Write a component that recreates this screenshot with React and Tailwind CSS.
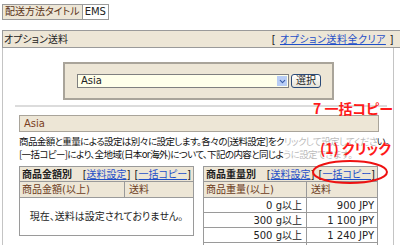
import { ChevronDown } from 'lucide-react';

const beige = 'bg-[#ede6d6]';

const Link = ({ children }) => (
    <span>
        [<span className="text-[#1f4fc8] underline">{children}</span>]
    </span>
);

const TableHead = ({ title, cols, split }) => (
    <>
        <div className={`flex h-[15px] items-center justify-between border-b border-[#9a9a9a] ${beige} px-[2px]`}>
            <span className="font-bold">{title}</span>
            <span className="flex gap-[4px]">
                <Link>送料設定</Link>
                <Link>一括コピー</Link>
            </span>
        </div>
        <div className={`flex h-[16px] border-b border-[#9a9a9a] ${beige} text-[#6b3b1b]`}>
            <div className={`${split} border-r border-[#9a9a9a] pl-[2px] leading-[16px]`}>{cols[0]}</div>
            <div className="flex-1 pl-[4px] leading-[16px]">{cols[1]}</div>
        </div>
    </>
);

const weightRows = [
    ['0 g以上', '900 JPY'],
    ['300 g以上', '1 100 JPY'],
    ['500 g以上', '1 240 JPY'],
    ['', ''],
];

export default function App() {
    return (
        <div className="relative h-[245px] w-[400px] overflow-hidden bg-white text-[10px] text-[#222] [font-family:'DejaVu_Sans','Noto_Sans_CJK_JP',sans-serif] [font-feature-settings:'palt']">
            {/* tab row */}
            <div className="flex pl-[2px] pt-[4px]">
                <div className={`h-[16px] border border-[#9a9a9a] ${beige} px-[2px] leading-[14px] text-[#5b3418]`}>配送方法タイトル</div>
                <div className="h-[16px] border border-l-0 border-[#9a9a9a] px-[2px] leading-[14px]">EMS</div>
            </div>

            {/* option panel header */}
            <div className={`ml-[2px] mt-[10px] flex h-[18px] items-center justify-between border border-r-0 border-[#9a9a9a] ${beige} pl-[1px] pr-[6px]`}>
                <span>オプション送料</span>
                <span className="tracking-[0.5px]">
                    [ <span className="text-[#1f4fc8] underline">オプション送料全クリア</span> ]
                </span>
            </div>

            {/* option panel body */}
            <div className="ml-[2px] mr-[6px] h-[200px] border-x border-[#c4c4c4] pt-[14px]">
                <div className={`ml-[60px] flex h-[38px] w-[271px] items-center border-2 border-[#a9a49a] ${beige} pl-[12px]`}>
                    <div className="flex h-[14px] w-[212px] items-center justify-between border border-[#7f7f7f] bg-[#ffffea] pl-[3px]">
                        <span className="leading-[12px]">Asia</span>
                        <span className="mr-[1px] flex h-[10px] w-[10px] items-center justify-center bg-[#b8cdf5]">
                            <ChevronDown size={9} strokeWidth={3} color="#3b5ea8" />
                        </span>
                    </div>
                    <div className="ml-[2px] flex h-[14px] w-[30px] items-center justify-center rounded-[3px] border border-[#2b4a78] bg-gradient-to-b from-white to-[#e6e3d8] leading-[12px]">
                        選択
                    </div>
                </div>

                <div className="ml-[12px] mr-[6px] mt-[5px] h-[2px] bg-[#dcdcdc]" />

                <div className={`ml-[16px] mr-[14px] mt-[8px] h-[17px] border border-[#a9a49a] ${beige} pl-[4px] leading-[15px] text-[#7a3e1e]`}>
                    Asia
                </div>

                <div className="ml-[16px] mt-[3px] whitespace-nowrap text-[9.5px] leading-[13px] tracking-[-0.6px] text-[#111] [font-family:'Noto_Sans_CJK_JP',sans-serif]">
                    <div>商品金額と重量による設定は別々に設定します。各々の[送料設定]をクリックして設定してください。</div>
                    <div>[一括コピー]により、全地域(日本or海外)について、下記の内容と同じように設定できます。</div>
                </div>

                <div className="ml-[16px] mr-[14px] mt-[5px] flex gap-[9px]">
                    {/* by price */}
                    <div className="h-[70px] w-[175px] border border-[#9a9a9a]">
                        <TableHead title="商品金額別" cols={['商品金額(以上)', '送料']} split="w-[105px]" />
                        <div className="flex h-[37px] items-center justify-center">現在、送料は設定されておりません。</div>
                    </div>

                    {/* by weight */}
                    <div className="h-[90px] w-[175px] border border-[#9a9a9a]">
                        <TableHead title="商品重量別" cols={['商品重量(以上)', '送料']} split="w-[103px]" />
                        {weightRows.map(([w, p], i) => (
                            <div key={i} className="flex h-[15px] border-b border-[#9a9a9a]">
                                <div className="w-[103px] border-r border-[#9a9a9a] pr-[4px] text-right leading-[15px]">{w}</div>
                                <div className="flex-1 pr-[3px] text-right leading-[15px]">{p}</div>
                            </div>
                        ))}
                    </div>
                </div>
            </div>

            {/* annotations */}
            <div className="absolute left-[284px] top-[132px] h-[28px] w-[92px] bg-white/70" />
            <div className="absolute left-[313px] top-[98px] text-[14px] font-bold text-[#ff1a1a] [font-family:'Noto_Sans_CJK_JP',sans-serif]">7 一括コピー</div>
            <div className="absolute left-[320px] top-[138px] text-[14px] font-bold text-[#ff1a1a] [font-family:'Noto_Sans_CJK_JP',sans-serif]">(1) クリック</div>
            <svg className="absolute left-[311px] top-[159px]" width="78" height="26">
                <ellipse cx="39" cy="13" rx="37" ry="11" fill="none" stroke="#ee1111" strokeWidth="2" />
            </svg>
        </div>
    );
}
